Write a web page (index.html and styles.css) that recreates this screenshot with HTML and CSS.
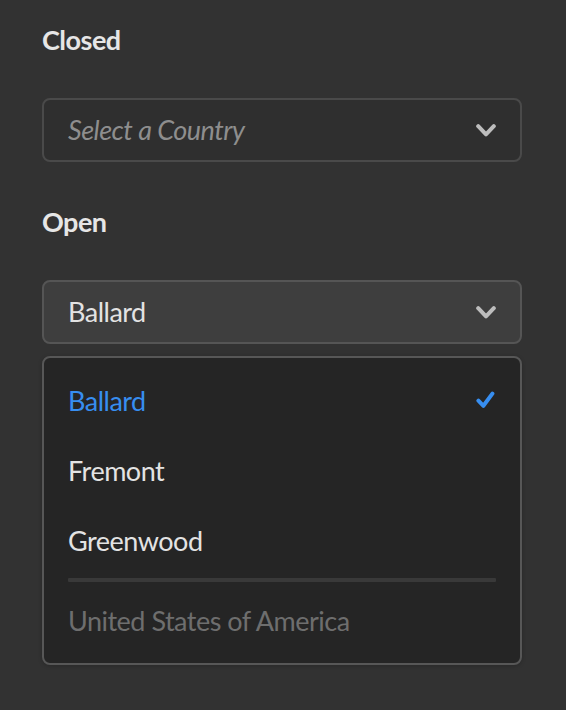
FILE: index.html
```html
<!DOCTYPE html>
<html lang="en">
<head>
<meta charset="utf-8">
<title>Picker</title>
<link rel="stylesheet" href="styles.css">
</head>
<body>
<div class="page">
  <div class="label">Closed</div>
  <div class="picker">
    <span class="value placeholder">Select a Country</span>
    <svg class="chevron" width="20" height="13" viewBox="0 0 20 13"><path d="M2.2 2.2 L10 10.4 L17.8 2.2"/></svg>
  </div>

  <div class="label label-open">Open</div>
  <div class="picker is-open">
    <span class="value">Ballard</span>
    <svg class="chevron" width="20" height="13" viewBox="0 0 20 13"><path d="M2.2 2.2 L10 10.4 L17.8 2.2"/></svg>
  </div>

  <div class="menu">
    <div class="item selected">
      <span>Ballard</span>
      <svg class="check" width="19" height="18" viewBox="0 0 19 18"><path d="M2.4 9.6 L7.4 14.8 L16.4 2.6"/></svg>
    </div>
    <div class="item"><span>Fremont</span></div>
    <div class="item"><span>Greenwood</span></div>
    <div class="divider"></div>
    <div class="item disabled"><span>United States of America</span></div>
  </div>
</div>
</body>
</html>
```

FILE: styles.css
```css
html, body {
  margin: 0;
  padding: 0;
  background: #323232;
}

body {
  font-family: "Lato", "Open Sans", sans-serif;
  font-size: 27px;
  letter-spacing: -0.5px;
  color: #e3e3e3;
  min-height: 710px;
}

.page {
  width: 480px;
  padding: 20px 0 0 42px;
}

.label {
  font-weight: 700;
  line-height: 40px;
  height: 40px;
  margin-bottom: 38px;
  color: #e6e6e6;
}

.label-open {
  margin-top: 40px;
}

.picker {
  box-sizing: border-box;
  height: 64px;
  border: 2px solid #4a4a4a;
  border-radius: 8px;
  background: #2f2f2f;
  padding: 0 24px;
  display: flex;
  align-items: center;
  justify-content: space-between;
}

.picker.is-open {
  background: #3e3e3e;
  border-color: #555555;
}

.value {
  line-height: 40px;
  color: #e3e3e3;
}

.placeholder {
  font-style: italic;
  color: #8e8e8e;
}

.chevron path {
  fill: none;
  stroke: #bdbdbd;
  stroke-width: 4;
  stroke-linecap: round;
  stroke-linejoin: round;
}

.menu {
  margin-top: 12px;
  box-sizing: border-box;
  border: 2px solid #575757;
  border-radius: 8px;
  background: #252525;
  padding: 7px 0 8px;
  box-shadow: 0 1px 4px rgba(0, 0, 0, 0.2);
}

.item {
  height: 70px;
  padding: 0 24px;
  display: flex;
  align-items: center;
  justify-content: space-between;
  color: #e3e3e3;
}

.item.selected {
  color: #378ef0;
}

.item.disabled {
  color: #6e6e6e;
}

.check {
  margin-right: 1px;
}

.check path {
  fill: none;
  stroke: #378ef0;
  stroke-width: 4;
  stroke-linecap: round;
  stroke-linejoin: round;
}

.divider {
  height: 4px;
  margin: 3px 24px;
  background: #393939;
  border-radius: 1px;
}
```
